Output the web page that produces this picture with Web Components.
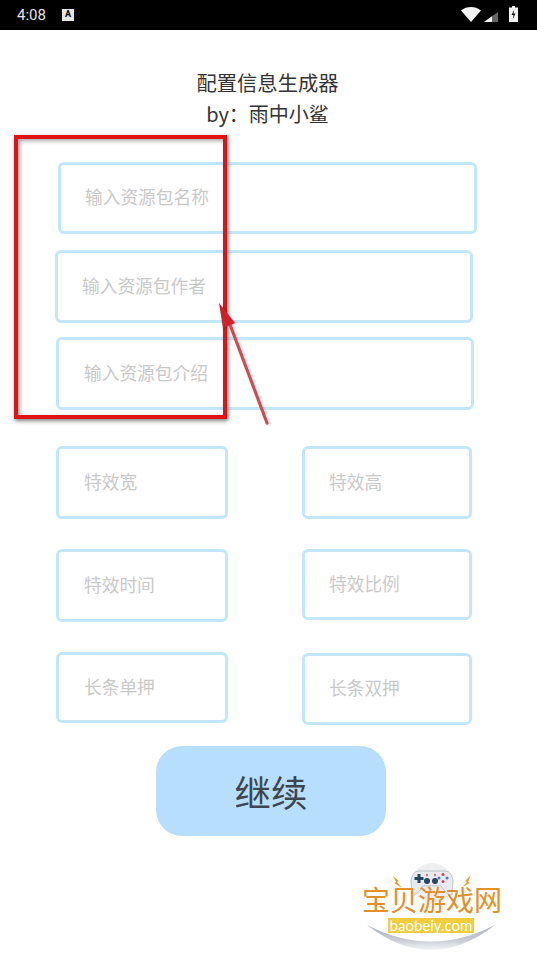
<!DOCTYPE html>
<html lang="zh">
<head>
<meta charset="utf-8">
<title>配置信息生成器</title>
<style>
    html, body { margin: 0; padding: 0; background: #fff; }
    body { width: 537px; height: 956px; overflow: hidden; position: relative; font-family: "Noto Sans CJK SC", "Noto Sans", sans-serif; }
    config-field.f1 { margin: 0 60px 16px 58px; --field-pad: 24px; }
    config-field.f2 { margin: 0 64px 14px 55px; --field-pad: 24px; }
    config-field.f3 { margin: 0 63px 36px 56px; }
    config-field[slot=right] { --field-pad: 24px; }
</style>
</head>
<body>
<status-bar></status-bar>
<config-form>
    <span slot="title">配置信息生成器</span>
    <span slot="title" style="font-size: 20px">by：雨中小鲨</span>
    <config-field class="f1" slot="wide" height="72">输入资源包名称</config-field>
    <config-field class="f2" slot="wide" height="73">输入资源包作者</config-field>
    <config-field class="f3" slot="wide" height="73">输入资源包介绍</config-field>
    <config-field slot="left" height="73">特效宽</config-field>
    <config-field slot="right" height="73">特效高</config-field>
    <config-field slot="left" height="73">特效时间</config-field>
    <config-field slot="right" height="71">特效比例</config-field>
    <config-field slot="left" height="71">长条单押</config-field>
    <config-field slot="right" height="72" nudge="3">长条双押</config-field>
    <primary-button slot="action">继续</primary-button>
</config-form>
<red-annotation></red-annotation>
<site-watermark></site-watermark>

<script>
class StatusBar extends HTMLElement {
    constructor() {
        super();
        this.attachShadow({ mode: 'open' });
        this.shadowRoot.innerHTML = `
            <style>
                :host { display: flex; align-items: center; height: 30px; padding: 0 19px 0 17px; background: #000; color: #e4e4e4; font: 15px Roboto, sans-serif; }
                .badge { width: 12px; height: 12px; margin-left: 16px; background: #e4e4e4; color: #000; font: bold 9px/11px Roboto, sans-serif; text-align: center; }
                .icons { margin-left: auto; display: flex; align-items: flex-end; height: 22px; align-self: flex-start; }
                svg { display: block; }
                .signal { margin-left: 3px; }
                .battery { margin-left: 11px; }
            </style>
            <span>4:08</span>
            <span class="badge">A</span>
            <span class="icons">
                <svg width="20" height="15" viewBox="0 0 20 15"><path d="M0 3.500C3 1 6.300 0 10 0s7 1 10 3.500L10 15z" fill="#f4f4f4"/></svg>
                <svg class="signal" width="14" height="10" viewBox="0 0 14 10"><path d="M14 0V10H0z" fill="#666"/><path d="M8 4.300V10H0z" fill="#f4f4f4"/></svg>
                <svg class="battery" width="9" height="16" viewBox="0 0 9 16"><path d="M3 0h3v1.500h3V16H0V1.500h3z" fill="#f4f4f4"/><path d="M5.300 3.500 2.500 9h2l-.8 4.500L6.500 7.500h-2z" fill="#111"/></svg>
            </span>
        `;
    }
}

class ConfigForm extends HTMLElement {
    constructor() {
        super();
        this.attachShadow({ mode: 'open' });
        this.shadowRoot.innerHTML = `
            <style>
                :host { display: block; padding-top: 37px; }
                .title { display: flex; flex-direction: column; align-items: center; width: 535px; color: #333; font-size: 20.300px; line-height: 31px; height: 95px; }
                ::slotted([slot=title]) { display: block; }
                .wide { display: flex; flex-direction: column; }
                .pairs { display: grid; grid-template-columns: 172px 170px; column-gap: 74px; margin-left: 56px; }
                .col { display: flex; flex-direction: column; gap: 30px; }
                .action { display: flex; margin: 21px 0 0 156px; }
            </style>
            <div class="title"><slot name="title"></slot></div>
            <div class="wide"><slot name="wide"></slot></div>
            <div class="pairs">
                <div class="col"><slot name="left"></slot></div>
                <div class="col"><slot name="right"></slot></div>
            </div>
            <div class="action"><slot name="action"></slot></div>
        `;
    }
}

class ConfigField extends HTMLElement {
    constructor() {
        super();
        this.attachShadow({ mode: 'open' });
        this.shadowRoot.innerHTML = `
            <style>
                :host { display: flex; align-items: center; box-sizing: border-box; height: var(--field-height, 73px); padding: 0 0 4px var(--field-pad, 25px); border: 3px solid #c2e7fa; border-radius: 6px; color: #c9c9c9; font-size: 17.700px; background: #fff; }
            </style>
            <slot></slot>
        `;
    }
    connectedCallback() {
        this.style.setProperty('--field-height', this.getAttribute('height') + 'px');
        if (this.hasAttribute('nudge')) this.style.marginTop = this.getAttribute('nudge') + 'px';
    }
}

class PrimaryButton extends HTMLElement {
    constructor() {
        super();
        this.attachShadow({ mode: 'open' });
        this.shadowRoot.innerHTML = `
            <style>
                :host { display: flex; align-items: center; justify-content: center; width: 230px; height: 90px; border-radius: 26px; background: #b8defe; color: #3d4650; font-size: 36.500px; }
            </style>
            <slot></slot>
        `;
    }
}

class RedAnnotation extends HTMLElement {
    constructor() {
        super();
        this.attachShadow({ mode: 'open' });
        this.shadowRoot.innerHTML = `
            <style>
                :host { position: absolute; left: 0; top: 0; width: 537px; height: 956px; pointer-events: none; }
                .box { position: absolute; left: 14px; top: 135px; width: 213px; height: 284px; box-sizing: border-box; border: 4px solid #df1313; box-shadow: 1px 2px 4px rgba(0,0,0,.5), inset 2px 2px 4px rgba(0,0,0,.35); }
                svg { position: absolute; left: 0; top: 0; filter: drop-shadow(1px 1px 1px rgba(0,0,0,.25)); }
            </style>
            <div class="box"></div>
            <svg width="537" height="956" viewBox="0 0 537 956">
                <line x1="267" y1="423" x2="229" y2="322" stroke="#d24a50" stroke-width="3" stroke-linecap="round"/>
                <path d="M219 303 L235 323 L223 328 Z" fill="#d0212a"/>
            </svg>
        `;
    }
}

class SiteWatermark extends HTMLElement {
    constructor() {
        super();
        this.attachShadow({ mode: 'open' });
        this.shadowRoot.innerHTML = `
            <style>
                :host { position: absolute; left: 350px; top: 850px; width: 170px; height: 106px; }
                svg { position: absolute; left: 0; top: 0; }
                .name { position: absolute; left: 12px; top: 38px; color: #e48f28; font-family: "Liberation Sans", "Noto Sans CJK SC", sans-serif; font-size: 28px; line-height: 28px; white-space: nowrap; }
                .url { position: absolute; left: 38px; top: 68px; width: 86px; height: 15px; background: #f1cc3c; color: #fff; font: 15px/15px Lato, sans-serif; text-align: center; white-space: nowrap; }
            </style>
            <svg width="170" height="106" viewBox="0 0 170 106">
                <defs>
                    <linearGradient id="moon" x1="0" y1="0" x2="0" y2="1">
                        <stop offset="0" stop-color="#a9afbb"/>
                        <stop offset=".6" stop-color="#c8ccd3"/>
                        <stop offset="1" stop-color="#f4f5f7"/>
                    </linearGradient>
                </defs>
                <path d="M17 75Q81 108 145 75Q81 125 17 75Z" fill="url(#moon)"/>
                <circle cx="82" cy="33" r="20" fill="#efeff1"/>
                <path d="M69 21H95C100 21 103 26 103 32L102 45C98 45 95 42 91 36H73C69 42 66 45 62 45L61 32C61 26 64 21 69 21Z" fill="#e8eaed" stroke="#a9b1ba" stroke-width=".7"/>
                <path d="M67.500 24h3v3h3v3h-3v3h-3v-3h-3v-3h3z" fill="#27465f"/>
                <circle cx="77" cy="31" r="3" fill="#27465f"/><circle cx="85" cy="31" r="3" fill="#27465f"/>
                <circle cx="93" cy="24.500" r="1.500" fill="#d9434e"/><circle cx="97" cy="28" r="1.500" fill="#3d7fd1"/><circle cx="89" cy="28" r="1.500" fill="#3d7fd1"/><circle cx="93" cy="31.500" r="1.500" fill="#d9434e"/>
                <circle cx="77" cy="25" r="1" fill="#d9434e"/><circle cx="85" cy="25" r="1" fill="#d9434e"/>
                <path d="M43 26l6 5-2 1 5 6-8-5 2-1z" fill="#e3a12c"/>
                <path d="M121 25l-6 6 2 1-5 5 8-4-2-1z" fill="#e3a12c"/>
            </svg>
            <div class="name">宝贝游戏网</div>
            <div class="url">baobeiy.com</div>
        `;
    }
}

customElements.define('status-bar', StatusBar);
customElements.define('config-form', ConfigForm);
customElements.define('config-field', ConfigField);
customElements.define('primary-button', PrimaryButton);
customElements.define('red-annotation', RedAnnotation);
customElements.define('site-watermark', SiteWatermark);
</script>
</body>
</html>
